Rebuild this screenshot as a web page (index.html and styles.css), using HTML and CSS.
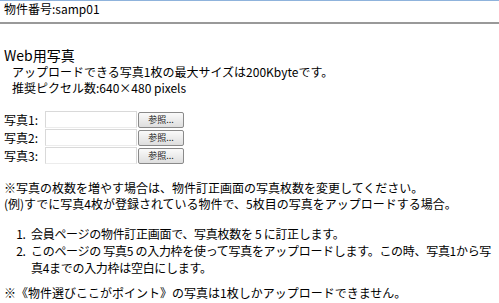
FILE: index.html
```html
<!DOCTYPE html>
<html lang="ja">
<head>
	<meta charset="utf-8">
	<title>Web用写真</title>
	<link rel="stylesheet" href="styles.css">
</head>
<body>
	<div class="page">
		<div class="property-id">物件番号:samp01</div>

		<div class="photo-section">
			<h2 class="section-title">Web用写真</h2>
			<p class="note-indent">アップロードできる写真1枚の最大サイズは200Kbyteです。</p>
			<p class="note-indent">推奨ピクセル数:640×480 pixels</p>

			<div class="photo-rows">
				<div class="photo-row">
					<label>写真1:</label>
					<input type="text" class="file-input">
					<button class="browse-btn">参照...</button>
				</div>
				<div class="photo-row">
					<label>写真2:</label>
					<input type="text" class="file-input">
					<button class="browse-btn">参照...</button>
				</div>
				<div class="photo-row">
					<label>写真3:</label>
					<input type="text" class="file-input">
					<button class="browse-btn">参照...</button>
				</div>
			</div>

			<p>※写真の枚数を増やす場合は、物件訂正画面の写真枚数を変更してください。</p>
			<p>(例)すでに写真4枚が登録されている物件で、5枚目の写真をアップロードする場合。</p>

			<ol class="steps">
				<li>会員ページの物件訂正画面で、写真枚数を 5 に訂正します。</li>
				<li>このページの 写真5 の入力枠を使って写真をアップロードします。この時、写真1から写真4までの入力枠は空白にします。</li>
			</ol>

			<p>※《物件選びここがポイント》の写真は1枚しかアップロードできません。</p>
		</div>
	</div>
</body>
</html>
```

FILE: styles.css
```css
* {
	margin: 0;
	padding: 0;
	box-sizing: border-box;
}

body {
	font-family: "Noto Sans CJK JP", "Noto Sans", sans-serif;
	font-size: 12px;
	line-height: 16px;
	color: #000;
	background: #fff;
	border-top: 1px solid #8fb3dc;
}

.page {
	width: 499px;
}

.property-id {
	padding: 0 4px;
	height: 23px;
	border-bottom: 2px solid #999;
}

.photo-section {
	padding: 22px 4px 0;
}

.section-title {
	font-size: 14px;
	font-weight: normal;
	line-height: 18px;
}

.note-indent {
	padding-left: 8px;
}

.photo-rows {
	margin: 15px 0 16px;
	display: flex;
	flex-direction: column;
	gap: 1px;
}

.photo-row {
	display: flex;
	align-items: center;
	height: 17px;
}

.photo-row label {
	width: 41px;
}

.file-input {
	width: 92px;
	height: 17px;
	border: 1px solid #d9d9d9;
	border-bottom-color: #ececec;
	background: #fff;
	font: inherit;
}

.browse-btn {
	width: 46px;
	height: 16px;
	margin-left: 1px;
	font-family: inherit;
	font-size: 9px;
	line-height: 12px;
	color: #222;
	background: linear-gradient(#fafafa, #dedede);
	border: 1px solid #8a8a8a;
	border-radius: 2px;
}

.steps {
	margin: 13px 0 9px;
	padding-left: 24px;
	line-height: 17px;
	letter-spacing: -0.3px;
}

.steps li {
	padding-left: 3px;
}
```
